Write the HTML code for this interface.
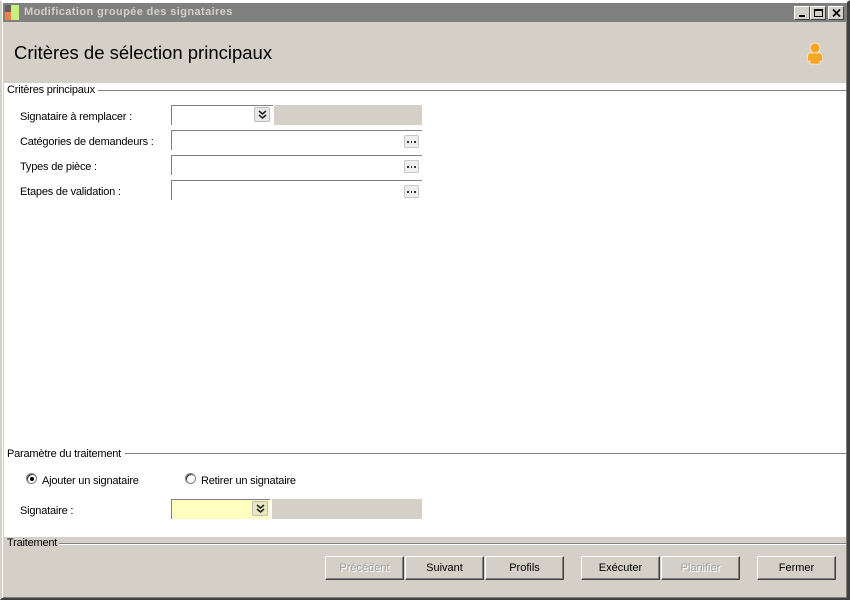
<!DOCTYPE html>
<html><head><meta charset="utf-8"><style>
*{margin:0;padding:0;box-sizing:border-box}
body{width:850px;height:600px;overflow:hidden;background:#d4d0c8;font-family:"Liberation Sans",sans-serif;font-size:11px;color:#000;position:relative}
.a{position:absolute}
.win{left:0;top:0;width:850px;height:600px;border-left:2px solid #d4d0c8;border-top:2px solid #fff;border-right:3px solid #404040;border-bottom:2px solid #404040;box-shadow:inset 1px 1px 0 #fff,inset -1px -1px 0 #808080}
.tb{left:3px;top:3px;width:843px;height:19px;background:#808080}
.tt{left:24px;top:6px;color:#d4d0c8;font-weight:bold;font-size:11px;letter-spacing:0.4px}
.wb{top:6px;width:16px;height:14px;background:#d4d0c8;border:1px solid;border-color:#fff #404040 #404040 #fff}
.panel{left:4px;top:83px;width:842px;height:454px;background:#fff}
.lbl{font-size:11px;letter-spacing:-0.2px;white-space:nowrap}
.line{height:1px;background:#808080}
.inp{height:20px;border-top:1px solid #808080;border-left:1px solid #808080;background:#fff}
.dots{width:15px;height:13px;border:1px solid #c8c8c8;background:#eee;border-radius:2px}
.dd{width:16px;height:15px;border:1px solid #bbb;border-radius:2px}
.btn{top:556px;height:24px;width:79px;border:1px solid;border-color:#fff #404040 #404040 #fff;box-shadow:inset -1px -1px 0 #808080;text-align:center;line-height:22px;font-size:11px}
.dis{color:#a0a0a0;text-shadow:1px 1px 0 #fff}
.rad{width:11px;height:11px;border-radius:50%;border:1px solid #808080;background:#fff;box-shadow:inset 1px 1px 0 #404040}
</style></head><body>
<div class="a win"></div>
<div class="a tb"></div>
<div class="a" style="left:5px;top:5px;width:6px;height:7px;background:#606060"></div>
<div class="a" style="left:5px;top:12px;width:6px;height:8px;background:#f08050"></div>
<div class="a" style="left:11px;top:5px;width:8px;height:15px;background:#c8f080"></div>
<div class="a tt">Modification groupée des signataires</div>
<div class="a wb" style="left:794px"><div class="a" style="left:4px;top:8px;width:6px;height:2px;background:#000"></div></div>
<div class="a wb" style="left:810px"><div class="a" style="left:3px;top:2px;width:9px;height:8px;border:1px solid #000;border-top-width:2px"></div></div>
<div class="a wb" style="left:828px"><svg class="a" style="left:3px;top:2px" width="9" height="8"><path d="M1 0.5L8 7.5M8 0.5L1 7.5" stroke="#000" stroke-width="1.6"/></svg></div>
<div class="a" style="left:14px;top:42px;font-size:18.5px">Critères de sélection principaux</div>
<svg class="a" style="left:805px;top:42px" width="20" height="24"><circle cx="10" cy="6" r="5" fill="#f5a623" stroke="#fff" stroke-width="0.6"/><path d="M3 13 Q3 11 6 11 L14 11 Q17 11 17 13 L18 19 L15 19 L15 22 L5 22 L5 19 L2 19 Z" fill="#f5a623" stroke="#fff" stroke-width="0.6"/></svg>
<div class="a panel"></div>
<div class="a lbl" style="left:7px;top:84px">Critères principaux</div>
<div class="a line" style="left:98px;top:90px;width:748px"></div>
<div class="a lbl" style="left:20px;top:111px">Signataire à remplacer :</div>
<div class="a inp" style="left:171px;top:105px;width:102px"></div>
<div class="a dd" style="left:254px;top:107px;background:#e8e8e8"><svg class="a" style="left:3px;top:2px" width="9" height="10"><path d="M1 1L4.5 4L8 1M1 5L4.5 8L8 5" stroke="#222" stroke-width="1.6" fill="none"/></svg></div>
<div class="a" style="left:274px;top:105px;width:148px;height:20px;background:#d4d0c8"></div>
<div class="a lbl" style="left:20px;top:136px">Catégories de demandeurs :</div>
<div class="a inp" style="left:171px;top:130px;width:251px"></div>
<div class="a dots" style="left:404px;top:135px"><div class="a" style="left:2px;top:5px;width:9px;height:2px;border-left:2px solid #333;border-right:2px solid #333;background:linear-gradient(90deg,transparent 2px,#333 2px,#333 3px,transparent 3px)"></div></div>
<div class="a lbl" style="left:20px;top:161px">Types de pièce :</div>
<div class="a inp" style="left:171px;top:155px;width:251px"></div>
<div class="a dots" style="left:404px;top:160px"><div class="a" style="left:2px;top:5px;width:9px;height:2px;border-left:2px solid #333;border-right:2px solid #333;background:linear-gradient(90deg,transparent 2px,#333 2px,#333 3px,transparent 3px)"></div></div>
<div class="a lbl" style="left:20px;top:186px">Etapes de validation :</div>
<div class="a inp" style="left:171px;top:180px;width:251px"></div>
<div class="a dots" style="left:404px;top:185px"><div class="a" style="left:2px;top:5px;width:9px;height:2px;border-left:2px solid #333;border-right:2px solid #333;background:linear-gradient(90deg,transparent 2px,#333 2px,#333 3px,transparent 3px)"></div></div>
<div class="a lbl" style="left:7px;top:448px">Paramètre du traitement</div>
<div class="a line" style="left:125px;top:453px;width:721px"></div>
<div class="a rad" style="left:26px;top:473px"></div>
<div class="a" style="left:30px;top:477px;width:4px;height:4px;border-radius:50%;background:#000"></div>
<div class="a lbl" style="left:42px;top:475px">Ajouter un signataire</div>
<div class="a rad" style="left:185px;top:473px"></div>
<div class="a lbl" style="left:201px;top:475px">Retirer un signataire</div>
<div class="a lbl" style="left:20px;top:505px">Signataire :</div>
<div class="a" style="left:171px;top:499px;width:99px;height:20px;background:#ffffc0;border-top:1px solid #808080;border-left:1px solid #808080"></div>
<div class="a dd" style="left:252px;top:501px;background:#e8e8c0"><svg class="a" style="left:3px;top:2px" width="9" height="10"><path d="M1 1L4.5 4L8 1M1 5L4.5 8L8 5" stroke="#222" stroke-width="1.6" fill="none"/></svg></div>
<div class="a" style="left:272px;top:499px;width:150px;height:20px;background:#d4d0c8"></div>
<div class="a lbl" style="left:7px;top:537px">Traitement</div>
<div class="a line" style="left:59px;top:543px;width:787px"></div>
<div class="a" style="left:59px;top:544px;width:787px;height:1px;background:#fff"></div>
<div class="a btn dis" style="left:325px">Précédent</div>
<div class="a btn" style="left:405px">Suivant</div>
<div class="a btn" style="left:485px">Profils</div>
<div class="a btn" style="left:581px">Exécuter</div>
<div class="a btn dis" style="left:661px">Planifier</div>
<div class="a btn" style="left:757px">Fermer</div>
</body></html>
